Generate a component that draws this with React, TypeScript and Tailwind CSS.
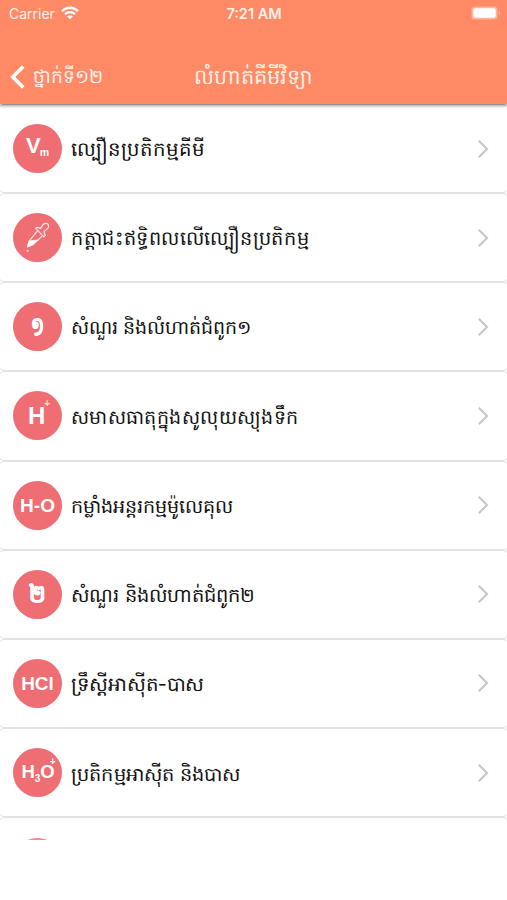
import type { ReactNode } from 'react'

const icons: Record<string, ReactNode> = {
  vm: (
    <span className="flex items-start text-[22px] font-bold leading-[22px]">
      <span className="-mt-[5px]">V</span>
      <span className="-ml-px mt-[7px] text-[10.5px] leading-[11px]">m</span>
    </span>
  ),
  dropper: (
    <svg viewBox="0 0 49 49" className="size-[49px]" fill="none" stroke="#ffe9e6" strokeWidth="1.2" strokeLinecap="round" strokeLinejoin="round">
      <path d="M22.5 15.2l1.6-.8 3.4 1 2.4-3.6c1.2-1.7 3.6-2 4.9-.8 1.3 1.3 1.1 3.6-.7 4.9l-3.2 2.8 1.4 3.6-1.5 1.6z" />
      <path d="M24.6 17.6L16 28.3l-1.5 5.7 5.2-2.2 10.2-9.4" />
      <path d="M17.4 27.8l8.1-.9-5.8 4.7-5.3 2.4 1.8-5.1z" fill="white" stroke="white" strokeWidth=".6" />
      <circle cx="14.6" cy="37.8" r="1.1" fill="#ffd0cf" stroke="none" />
    </svg>
  ),
  one: <span className="scale-x-75 scale-y-110 text-[23px] font-bold leading-none [-webkit-text-stroke:0.8px_white]">១</span>,
  h: (
    <span className="flex items-start pl-[3px] text-[24px] font-bold leading-[24px]">
      H<span className="-ml-[1px] -mt-[5px] text-[10px] leading-[10px] text-[#ffe0c8]">+</span>
    </span>
  ),
  ho: <span className="text-[19px] font-bold leading-none">H-O</span>,
  two: <span className="scale-y-110 text-[22px] font-bold leading-none [-webkit-text-stroke:0.6px_white]">២</span>,
  hcl: <span className="text-[19px] font-bold leading-none">HCl</span>,
  h3o: (
    <span className="flex items-start text-[18.5px] font-bold leading-[19px]">
      H<span className="mt-[12px] text-[10px] leading-[10px]">3</span>O
      <span className="-ml-[5px] -mr-[2px] -mt-[5px] text-[10px] leading-[10px]">+</span>
    </span>
  ),
}

const rows = [
  { icon: 'vm', text: 'ល្បឿនប្រតិកម្មគីមី', size: 'text-[19.7px]' },
  { icon: 'dropper', text: 'កត្តាជះឥទ្ធិពលលើល្បឿនប្រតិកម្ម', size: 'text-[19.8px] scale-x-[0.973]' },
  { icon: 'one', text: 'សំណួរ និងលំហាត់ជំពូក១', size: 'text-[19px]' },
  { icon: 'h', text: 'សមាសធាតុក្នុងសូលុយស្យុងទឹក', size: 'text-[19.7px] scale-x-[0.965]' },
  { icon: 'ho', text: 'កម្លាំងអន្តរកម្មម៉ូលេគុល', size: 'text-[19.1px]' },
  { icon: 'two', text: 'សំណួរ និងលំហាត់ជំពូក២', size: 'text-[19.3px] scale-x-[1.01]' },
  { icon: 'hcl', text: 'ទ្រឹស្តីអាស៊ីត-បាស', size: 'text-[19.6px] scale-x-[1.01]' },
  { icon: 'h3o', text: 'ប្រតិកម្មអាស៊ីត និងបាស', size: 'text-[19.1px] scale-x-[1.012]' },
]

export default function App() {
  return (
    <div className="flex h-[900px] w-[507px] flex-col overflow-hidden bg-white font-['Inter','Noto_Sans',sans-serif]">
      <header className="relative z-10 h-[104px] shrink-0 bg-[#ff8a65] text-[#fff1ea] shadow-[0_1px_4px_rgba(0,0,0,0.6)]">
        <div className="grid h-7 grid-cols-3 items-center pl-[9px] pr-[6px] text-[13px]">
          <div className="flex items-center gap-[6px]">
            <span className="text-[14px] leading-none">Carrier</span>
            <svg viewBox="0 0 18 14" className="-mt-[2px] h-[14px] w-[18px]" fill="none" stroke="white" strokeWidth="2.3">
              <path d="M1 5.2C5.5.6 12.5.6 17 5.2M4 8.3c2.8-2.8 7.2-2.8 10 0" />
              <path d="M9 13.3l-2.8-2.9c1.6-1.5 4-1.5 5.6 0z" fill="white" stroke="none" />
            </svg>
          </div>
          <span className="-ml-[2px] -mt-px text-center text-[14.5px] font-semibold">7:21 AM</span>
          <svg viewBox="0 0 30 14" className="-mt-[2px] h-[14px] w-[30px] justify-self-end">
            <rect x=".5" y=".5" width="26" height="13" rx="3.5" fill="#ffb49c" />
            <rect x="2.3" y="2.3" width="22.4" height="9.4" rx="1.8" fill="white" />
            <path d="M28 5v4c1.6-.7 1.6-3.3 0-4z" fill="#ffb49c" />
          </svg>
        </div>
        <div className="grid h-[76px] grid-cols-[194px_120px_1fr] items-center pb-[2px]">
          <div className="flex items-center pl-[10px] pt-[24px]">
            <svg viewBox="0 0 15 24" className="h-6 w-[15px]" fill="none" stroke="white" strokeWidth="3.6">
              <path d="M13.3 1.5L2.7 12l10.6 10.5" />
            </svg>
            <span className="ml-[8px] whitespace-nowrap text-[18.8px]">ថ្នាក់ទី១២</span>
          </div>
          <h1 className="whitespace-nowrap pt-[24px] text-[21px]">លំហាត់គីមីវិទ្យា</h1>
        </div>
      </header>
      <main className="h-[736px] shrink-0 overflow-hidden">
        {rows.map((row) => (
          <div key={row.icon} className="-mx-[2px] flex h-[89.15px] items-center rounded-[6px] border border-[#e2e2e2] pl-[14px] pr-[19px]">
            <div className="flex size-[49px] shrink-0 items-center justify-center rounded-full bg-[#ee6e73] font-['Liberation_Sans','Noto_Sans',sans-serif] text-white">
              {icons[row.icon]}
            </div>
            <div className="ml-[9px] flex h-[32px] flex-1 items-center overflow-hidden whitespace-nowrap pt-[3px] text-[#111]">
              <span className={`origin-left ${row.size}`}>{row.text}</span>
            </div>
            <svg viewBox="0 0 12 20" className="h-5 w-3 shrink-0" fill="none" stroke="#c7c7cc" strokeWidth="2.2">
              <path d="M1.8 1.8L10 10l-8.2 8.2" />
            </svg>
          </div>
        ))}
        <div className="-mx-[2px] flex h-[89.15px] items-center rounded-[6px] border border-[#e2e2e2] pl-[14px] pt-[2px]">
          <div className="size-[49px] rounded-full bg-[#f08a8e]" />
        </div>
      </main>
    </div>
  )
}
